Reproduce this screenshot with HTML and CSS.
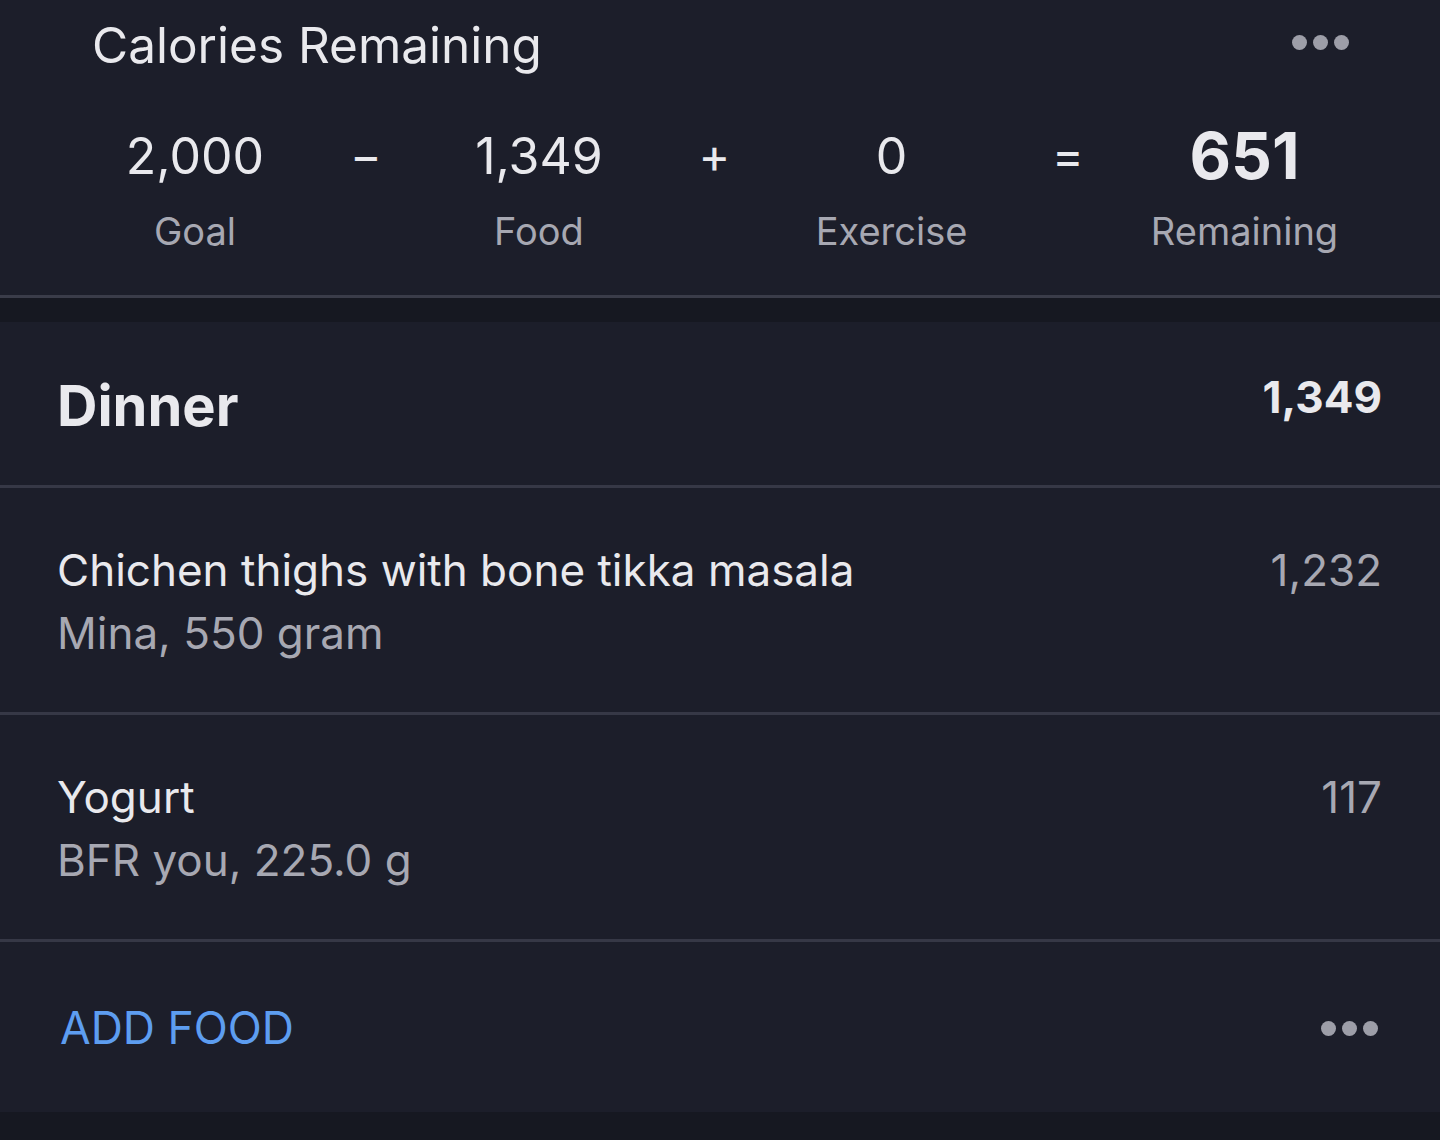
FILE: index.html
```html
<!DOCTYPE html>
<html lang="en">
<head>
    <meta charset="UTF-8">
    <meta name="viewport" content="width=device-width, initial-scale=1.0">
    <title>Diary</title>
    <link rel="stylesheet" href="styles.css">
</head>
<body>
    <section class="summary">
        <div class="summary-head">
            <h2 class="summary-title">Calories Remaining</h2>
            <span class="dots"><i></i><i></i><i></i></span>
        </div>
        <div class="equation">
            <div class="term"><span class="num">2,000</span><span class="label">Goal</span></div>
            <div class="op">&minus;</div>
            <div class="term"><span class="num">1,349</span><span class="label">Food</span></div>
            <div class="op">+</div>
            <div class="term"><span class="num">0</span><span class="label">Exercise</span></div>
            <div class="op">=</div>
            <div class="term"><span class="num total">651</span><span class="label">Remaining</span></div>
        </div>
    </section>

    <section class="meal">
        <div class="meal-head">
            <h3 class="meal-name">Dinner</h3>
            <span class="meal-total">1,349</span>
        </div>
        <div class="entry">
            <div class="entry-text">
                <div class="entry-name">Chichen thighs with bone tikka masala</div>
                <div class="entry-desc">Mina, 550 gram</div>
            </div>
            <span class="entry-cal">1,232</span>
        </div>
        <div class="entry">
            <div class="entry-text">
                <div class="entry-name">Yogurt</div>
                <div class="entry-desc">BFR you, 225.0 g</div>
            </div>
            <span class="entry-cal">117</span>
        </div>
        <div class="meal-foot">
            <span class="add-food">ADD FOOD</span>
            <span class="dots"><i></i><i></i><i></i></span>
        </div>
    </section>
</body>
</html>
```

FILE: styles.css
```css
body {
    margin: 0;
    background-color: #161821;
    color: #e9e9ed;
    font-family: Inter, "Noto Sans", sans-serif;
}

.summary {
    background-color: #1c1e2a;
    border-bottom: 3px solid #3a3c49;
    height: 295px;
}

.summary-head {
    display: flex;
    justify-content: space-between;
    align-items: center;
    padding: 14px 91px 0 92px;
}

.summary-title {
    margin: 0;
    font-size: 49.5px;
    font-weight: 400;
    line-height: 62px;
}

.summary-head .dots {
    margin-top: -6px;
}

.dots {
    display: flex;
    gap: 6px;
}

.dots i {
    width: 15px;
    height: 15px;
    border-radius: 50%;
    background-color: #9d9ea8;
}

.equation {
    display: grid;
    grid-template-columns: 170px 172px 174px 177px 177px 176px 177px;
    padding: 47px 0 0 110px;
}

.term, .op {
    display: flex;
    flex-direction: column;
    align-items: center;
}

.op {
    font-size: 48px;
    line-height: 66px;
    font-weight: 400;
}

.num {
    font-size: 50px;
    line-height: 66px;
    font-weight: 400;
}

.num.total {
    font-size: 64px;
    font-weight: 700;
}

.label {
    margin-top: 19px;
    font-size: 38px;
    line-height: 46px;
    color: #a7a8b2;
}

.meal {
    margin-top: 24px;
    background-color: #1c1e2a;
}

.meal-head, .entry {
    display: flex;
    justify-content: space-between;
    padding: 0 58px 0 57px;
    border-bottom: 3px solid #363846;
}

.meal-head {
    height: 163px;
    align-items: center;
}

.meal-name {
    margin: 0;
    font-size: 56px;
    font-weight: 700;
    line-height: 68px;
    padding-top: 4px;
}

.meal-total {
    font-size: 44px;
    font-weight: 700;
    margin-top: -14px;
}

.entry {
    align-items: flex-start;
    box-sizing: border-box;
    height: 227px;
    padding-top: 50px;
}

.entry-name, .entry-cal {
    font-size: 44px;
    line-height: 64px;
}

.entry-desc {
    font-size: 44px;
    line-height: 62px;
    color: #a7a8b2;
}

.entry-cal {
    color: #a7a8b2;
}

.meal-foot {
    height: 170px;
    display: flex;
    justify-content: space-between;
    align-items: center;
    padding: 0 62px 0 60px;
}

.add-food {
    font-size: 44.5px;
    color: #5d9df0;
    padding-top: 2px;
}

.meal-foot .dots {
    margin-top: 2px;
}
```
